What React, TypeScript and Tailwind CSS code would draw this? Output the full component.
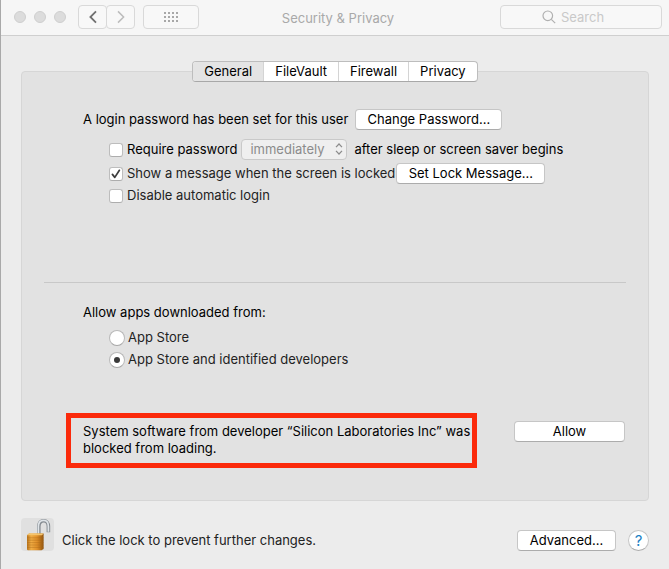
import { useState } from "react";
import type { ButtonHTMLAttributes, InputHTMLAttributes } from "react";
import clsx from "clsx";

const TABS = ["General", "FileVault", "Firewall", "Privacy"];

function PushButton({ className, ...props }: ButtonHTMLAttributes<HTMLButtonElement>) {
  return (
    <button
      type="button"
      className={clsx(
        "h-[21px] shrink-0 rounded border border-[#c6c6c6] border-b-[#acacac] bg-white text-center leading-[19px] whitespace-nowrap text-black",
        className
      )}
      {...props}
    />
  );
}

function Checkbox({ id, ...props }: InputHTMLAttributes<HTMLInputElement>) {
  return (
    <span className="relative flex size-[14px] shrink-0">
      <input
        id={id}
        type="checkbox"
        className="peer size-[14px] appearance-none rounded-[3px] border border-[#bdbdbd] border-b-[#adadad] bg-white"
        {...props}
      />
      <svg
        viewBox="0 0 14 14"
        className="pointer-events-none absolute inset-0 hidden size-[14px] peer-checked:block"
        fill="none"
        stroke="#3c3c3c"
        strokeWidth="1.7"
        strokeLinecap="round"
        strokeLinejoin="round"
      >
        <path d="M3.4 7.4 5.8 10.4 10.4 3.3" />
      </svg>
    </span>
  );
}

function Radio(props: InputHTMLAttributes<HTMLInputElement>) {
  return (
    <span className="relative flex size-4 shrink-0">
      <input
        type="radio"
        className="peer size-4 appearance-none rounded-full border border-[#b9b9b9] border-b-[#a6a6a6] bg-white"
        {...props}
      />
      <span className="pointer-events-none absolute inset-[5px] hidden rounded-full bg-[#3a3a3a] peer-checked:block" />
    </span>
  );
}

function Padlock() {
  return (
    <svg viewBox="0 0 33 33" className="size-[33px]">
      <defs>
        <linearGradient id="brass" x1="0" x2="1" y1="0" y2="0">
          <stop offset="0" stopColor="#b8731a" />
          <stop offset="0.25" stopColor="#f0ad45" />
          <stop offset="0.6" stopColor="#e0902a" />
          <stop offset="0.75" stopColor="#c47a1e" />
          <stop offset="1" stopColor="#8f5410" />
        </linearGradient>
      </defs>
      <path
        d="M17.8 17V8.5C17.8 4.6 19.8 2.8 22.7 2.8S27.4 5 27.4 8.4V14.2"
        fill="none"
        stroke="#858b91"
        strokeWidth="3.6"
      />
      <path
        d="M17.4 17V8.5C17.4 4.5 19.5 2.4 22.6 2.4S27.4 4.8 27.4 8.4V13.8"
        fill="none"
        stroke="#dfe4e8"
        strokeWidth="1.7"
      />
      <path d="M6 17.2 8 15.6H22.6V31L20.5 32.2H6.8L6 31.4Z" fill="url(#brass)" />
      <path d="M6 17.2 8 15.6H22.6L21 17.2Z" fill="#f6c56c" />
      <path
        d="M6 19.8H22.6M6 22.2H22.6M6 24.6H22.6M6 27H22.6M6 29.4H22.6"
        stroke="#a86616"
        strokeWidth="0.8"
        opacity="0.5"
      />
    </svg>
  );
}

function Toolbar() {
  return (
    <header className="grid h-9 grid-cols-[1fr_auto_1fr] items-center border-b border-[#cfcfcf] bg-[#f6f6f6] pr-[7px] pb-px pl-[13px]">
      <div className="flex items-center">
        <div className="flex gap-2">
          <button type="button" aria-label="Close" className="size-3 rounded-full border border-[#cfcfcf] bg-[#dcdcdc]" />
          <button type="button" aria-label="Minimize" className="size-3 rounded-full border border-[#cfcfcf] bg-[#dcdcdc]" />
          <button type="button" aria-label="Zoom" className="size-3 rounded-full border border-[#cfcfcf] bg-[#dcdcdc]" />
        </div>
        <div className="ml-3 flex h-6">
          <button
            type="button"
            aria-label="Back"
            className="flex w-[29px] items-center justify-center rounded border border-[#d9d9d9] bg-[#f8f8f8]"
          >
            <svg viewBox="0 0 8 14" className="h-[14px] w-2" fill="none" stroke="#707070" strokeWidth="1.8">
              <path d="M7 1.4 1.4 7 7 12.6" />
            </svg>
          </button>
          <button
            type="button"
            aria-label="Forward"
            className="-ml-px flex w-[29px] items-center justify-center rounded border border-[#d9d9d9] bg-[#f8f8f8]"
          >
            <svg viewBox="0 0 8 14" className="h-[14px] w-2" fill="none" stroke="#bcbcbc" strokeWidth="1.5">
              <path d="M1 1.4 6.6 7 1 12.6" />
            </svg>
          </button>
        </div>
        <button
          type="button"
          aria-label="Show All"
          className="ml-2 flex h-6 w-14 items-center justify-center rounded border border-[#d9d9d9] bg-[#f8f8f8]"
        >
          <svg viewBox="0 0 14 10" className="h-[10px] w-[14px]" stroke="#a8a8a8" strokeWidth="2" strokeDasharray="2 2">
            <path d="M0 1H14M0 5H14M0 9H14" />
          </svg>
        </button>
      </div>
      <h1 className="pt-0.5 text-[#a9a9a9]">Security &amp; Privacy</h1>
      <div className="relative h-6 w-[162px] justify-self-end">
        <input
          type="search"
          aria-label="Search"
          placeholder="Search"
          className="h-6 w-full rounded border border-[#d9d9d9] bg-[#f8f8f8] pl-[60px] outline-none placeholder:text-[#c9c9c9]"
        />
        <svg
          viewBox="0 0 14 14"
          className="pointer-events-none absolute top-[5px] left-[42px] size-[14px]"
          fill="none"
          stroke="#b0b0b0"
          strokeWidth="1.2"
        >
          <circle cx="5.8" cy="5.8" r="4.8" />
          <path d="M9.3 9.3 13.2 13.2" />
        </svg>
      </div>
    </header>
  );
}

export default function App() {
  const [tab, setTab] = useState("General");

  return (
    <div className="flex min-h-screen flex-col border-l border-[#a9a9a9] bg-[#ececec] font-['Inter',sans-serif] text-[13px] leading-[17px] text-black">
      <Toolbar />

      <main className="px-5 pt-[25px]">
        <div role="tablist" className="relative flex justify-center">
          <div className="flex h-[21px] divide-x divide-[#d4d4d4] overflow-hidden rounded border border-[#bdbdbd] border-b-[#a8a8a8] bg-white">
            {TABS.map((name) => (
              <button
                key={name}
                type="button"
                role="tab"
                aria-selected={tab === name}
                onClick={() => setTab(name)}
                className={clsx("px-[11px] leading-[19px]", tab === name && "bg-[#e4e4e4]")}
              >
                {name}
              </button>
            ))}
          </div>
        </div>

        <section className="-mt-[11px] rounded border border-[#d6d6d6] bg-[#e2e2e2] pt-[37px] pb-8">
          <div className="pl-[61px]">
            <div className="flex h-[21px] items-center gap-[7px]">
              <p>A login password has been set for this user</p>
              <PushButton className="w-[147px]">Change Password...</PushButton>
            </div>

            <div className="mt-[9px] flex h-[21px] items-center pl-[26px]">
              <Checkbox id="require" />
              <label htmlFor="require" className="ml-1">
                Require password
              </label>
              <div className="relative ml-1 h-[21px]">
                <select
                  aria-label="Require password delay"
                  disabled
                  className="h-[21px] w-[106px] appearance-none rounded border border-[#c9c9c9] bg-[#efefef] pl-2 leading-[19px] text-[#8b8b8b] opacity-100"
                >
                  <option>immediately</option>
                </select>
                <svg
                  viewBox="0 0 8 12"
                  className="pointer-events-none absolute top-[4px] right-1 h-3 w-2"
                  fill="none"
                  stroke="#8b8b8b"
                  strokeWidth="1.2"
                >
                  <path d="M1 4.2 4 1 7 4.2M1 7.8 4 11 7 7.8" />
                </svg>
              </div>
              <span className="ml-[7px]">after sleep or screen saver begins</span>
            </div>

            <div className="mt-[3px] flex h-[21px] items-center pl-[26px] text-[#222222]">
              <Checkbox id="message" defaultChecked />
              <label htmlFor="message" className="ml-1">
                Show a message when the screen is locked
              </label>
              <PushButton className="ml-px w-[149px]">Set Lock Message...</PushButton>
            </div>

            <div className="mt-px flex h-[21px] items-center pl-[26px] text-[#222222]">
              <Checkbox id="autologin" />
              <label htmlFor="autologin" className="ml-1">
                Disable automatic login
              </label>
            </div>
          </div>

          <hr className="mx-[22px] mt-[76px] border-[#c8c8c8]" />

          <fieldset className="mt-[19px] pl-[61px]">
            <legend className="h-[21px] leading-[21px]">Allow apps downloaded from:</legend>
            <div className="mt-1 flex h-[21px] items-center pl-[26px] text-[#222222]">
              <Radio id="store" name="source" />
              <label htmlFor="store" className="ml-[3px]">
                App Store
              </label>
            </div>
            <div className="mt-px flex h-[21px] items-center pl-[26px] text-[#222222]">
              <Radio id="identified" name="source" defaultChecked />
              <label htmlFor="identified" className="ml-[3px]">
                App Store and identified developers
              </label>
            </div>
          </fieldset>

          <div className="mt-[43px] flex items-start justify-between pr-[23px] pl-11">
            <p className="w-[411px] border-5 border-[#fb2a0b] pt-[5px] pb-1.5 pl-3">
              System software from developer “Silicon Laboratories Inc” was blocked from loading.
            </p>
            <PushButton className="mt-2 w-[111px]">Allow</PushButton>
          </div>
        </section>
      </main>

      <footer className="mt-[17px] flex items-end px-5 pb-[18px]">
        <button type="button" aria-label="Lock" className="rounded bg-[#e0e0e0]">
          <Padlock />
        </button>
        <p className="ml-2 leading-[21px] text-[#222222]">Click the lock to prevent further changes.</p>
        <PushButton className="mr-3 ml-auto w-[99px]">Advanced...</PushButton>
        <button
          type="button"
          aria-label="Help"
          className="size-[21px] rounded-full border border-[#c6c6c6] border-b-[#acacac] bg-white text-[15px] leading-[19px] text-[#1a7fc4]"
        >
          ?
        </button>
      </footer>
    </div>
  );
}
